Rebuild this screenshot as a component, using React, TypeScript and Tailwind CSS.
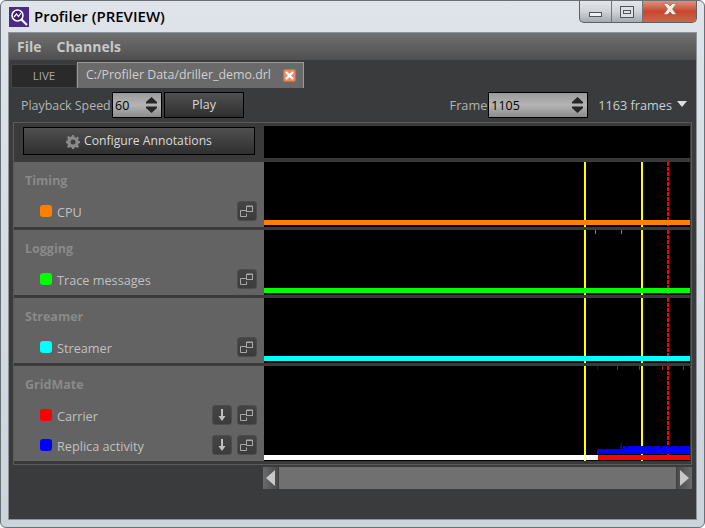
import type { ReactNode } from "react";

const groups = [
  { name: "Timing", bar: "bg-[#ff8000]", label: "CPU", color: "bg-[#ff8000]", ticks: [] as { x: string; c: string }[] },
  {
    name: "Logging",
    bar: "bg-[#00ff00]",
    label: "Trace messages",
    color: "bg-[#00ff00]",
    ticks: [
      { x: "left-[331px]", c: "bg-[#20c020]" },
      { x: "left-[357px]", c: "bg-[#20c020]" },
    ],
  },
  { name: "Streamer", bar: "bg-[#00ffff]", label: "Streamer", color: "bg-[#00ffff]", ticks: [] as { x: string; c: string }[] },
];

const gridTicks = [
  { x: "left-[333px]", c: "bg-[#0000e0]" },
  { x: "left-[353px]", c: "bg-[#c01010]" },
  { x: "left-[375px]", c: "bg-[#c01010]" },
  { x: "left-[398px]", c: "bg-[#c01010]" },
  { x: "left-[419px]", c: "bg-[#c01010]" },
];

const PopoutIcon = () => (
  <svg width="14" height="12" viewBox="0 0 14 12" fill="none" stroke="#a8a8a8" strokeWidth="1">
    <path d="M6 5.5H0.5V11.5H6.5V8.5" />
    <rect x="6.5" y="1.5" width="6" height="5" />
    <path d="M6.5 1H12.5" />
  </svg>
);

const DownIcon = () => (
  <svg width="8" height="12" viewBox="0 0 8 12" fill="#c0c0c0">
    <path d="M3 0H5V7H7.5L4 12L0.5 7H3Z" />
  </svg>
);

const IconBtn = ({ children }: { children: ReactNode }) => (
  <div className="flex h-5 w-5 items-center justify-center rounded-[3px] border border-[#4c4c4c] bg-gradient-to-b from-[#444444] to-[#3c3c3c]">{children}</div>
);

const Row = ({ label, color, down }: { label: string; color: string; down?: boolean }) => (
  <div className="flex h-[30px] items-center pl-[26px] pr-[7px]">
    <div className={`h-3 w-3 rounded-[3px] ${color}`} />
    <span className="ml-[5px] flex-1 translate-y-[2px] text-[12.7px] text-[#c0c0c0]">{label}</span>
    {down && (
      <div className="mr-[5px]">
        <IconBtn>
          <DownIcon />
        </IconBtn>
      </div>
    )}
    <IconBtn>
      <PopoutIcon />
    </IconBtn>
  </div>
);

const Spinner = ({ value, width }: { value: string; width: string }) => (
  <div className={`flex h-[26px] items-center justify-between border border-black bg-gradient-to-b from-[#9a9a9a] via-[#b4b4b4] to-[#8c8c8c] pl-[2px] pr-[4px] text-[12.5px] text-black ${width}`}>
    <span className="translate-y-px">{value}</span>
    <svg width="11" height="16" viewBox="0 0 11 16" fill="#262626">
      <path d="M5.5 0L11 5V6.5H0V5Z" />
      <path d="M0 9.5H11V11L5.5 16L0 11Z" />
    </svg>
  </div>
);

const WindowButtons = () => (
  <div className="flex h-[22px] overflow-hidden rounded-b-[5px] border border-t-0 border-[#5a6066] bg-gradient-to-b from-[#e4e7ea] via-[#d0d4d8] to-[#a4aab0]">
    <div className="flex w-[32px] items-end justify-center border-r border-[#6f757b] pb-[5px]">
      <div className="h-[5px] w-[13px] border border-[#50565c] bg-[#f0f2f4]" />
    </div>
    <div className="flex w-[31px] items-start justify-center border-r border-[#6f757b] pt-[5px]">
      <div className="flex h-[12px] w-[14px] items-center justify-center border border-[#50565c] bg-[#dde0e3]">
        <div className="h-[4px] w-[8px] border border-[#50565c]" />
      </div>
    </div>
    <div className="flex w-[53px] items-center justify-center bg-gradient-to-b from-[#dd9080] via-[#c9452c] to-[#c86650] pb-[5px]">
      <svg width="14" height="12" viewBox="0 0 14 12" fill="#f2eee6" stroke="#7a5048" strokeWidth="0.5">
        <path d="M0.5 0.5H4.5L7 3L9.5 0.5H13.5L9.5 6L13.5 11.5H9.5L7 9L4.5 11.5H0.5L4.5 6Z" />
      </svg>
    </div>
  </div>
);

const Chart = ({ children }: { children: ReactNode }) => (
  <div className="relative flex-1 overflow-hidden bg-black">
    {/* frame markers, behind the bars */}
    <div className="absolute inset-y-0 left-[320px] w-[2px] bg-[#ffff00]" />
    <div className="absolute inset-y-0 left-[377px] w-[2px] bg-[#ffff00]" />
    <div className="absolute inset-y-0 left-[403px] w-[2px] bg-[repeating-linear-gradient(to_bottom,#ff0000_0,#ff0000_4px,#000000_4px,#000000_5px)]" />
    {children}
  </div>
);

export default function App() {
  return (
    <div className="flex h-[528px] w-[705px] flex-col overflow-hidden rounded-[6px] border border-[#6a7077] bg-gradient-to-b from-[#dfe4ea] to-[#cdd3da] px-[7px] pb-[7px] font-['Open_Sans',sans-serif]">
      {/* title bar */}
      <div className="flex h-[31px] shrink-0 justify-between">
        <div className="flex items-start pl-[1px] pt-[6px]">
          <svg width="20" height="20" viewBox="0 0 20 20">
            <rect width="20" height="20" fill="#4b2a8c" />
            <circle cx="8.5" cy="8.5" r="5.5" fill="#3a2070" stroke="#fff" strokeWidth="1.5" />
            <path d="M5 10L7.5 7L9.5 9.5L12 6" stroke="#fff" strokeWidth="1.2" fill="none" />
            <path d="M12.5 12.5L18 18" stroke="#fff" strokeWidth="2.2" />
          </svg>
          <span className="ml-[5px] -translate-y-px text-[15px] font-semibold leading-[20px] text-black">Profiler (PREVIEW)</span>
        </div>
        <WindowButtons />
      </div>

      <div className="flex min-h-0 flex-1 flex-col border border-[#8d949b] bg-[#3a3b3d]">
        {/* menu bar */}
        <div className="flex h-[27px] shrink-0 items-center gap-[15px] bg-gradient-to-b from-[#707070] to-[#4f4f4f] pl-[8px] text-[14px] font-bold text-[#c8c8c8]">
          <span>File</span>
          <span>Channels</span>
        </div>

        {/* tabs */}
        <div className="flex h-[28px] shrink-0 items-end pl-[2px]">
          <div className="flex h-[24px] w-[66px] items-center justify-center border border-[#444444] bg-[#2a2a2a] text-[11.5px] text-[#a8a8a8]">LIVE</div>
          <div className="flex h-[26px] w-[227px] items-center border border-b-0 border-[#9a9a9a] bg-[#6a6a6a] pl-[8px] text-[12.4px] text-[#cfcfcf]">
            <span className="flex-1">C:/Profiler Data/driller_demo.drl</span>
            <div className="mr-[7px] flex h-[13px] w-[13px] items-center justify-center rounded-[2px] border border-[#e8603c] bg-[#eb8a68]">
              <svg width="9" height="9" viewBox="0 0 9 9" stroke="#ffffff" strokeWidth="2.4">
                <path d="M1 1L8 8M8 1L1 8" />
              </svg>
            </div>
          </div>
        </div>

        {/* toolbar */}
        <div className="flex h-[34px] shrink-0 items-center justify-between pl-[12px] pr-[9px]">
          <div className="flex items-center">
            <span className="w-[91px] translate-y-px whitespace-nowrap text-[12.4px] text-[#b4b4b4]">Playback Speed</span>
            <Spinner value="60" width="w-[50px]" />
            <div className="ml-[2px] flex h-[26px] w-[80px] items-center justify-center border border-black bg-gradient-to-b from-[#505050] to-[#2f2f2f] pt-px text-[12.5px] text-[#d8d8d8]">Play</div>
          </div>
          <div className="flex items-center">
            <span className="mr-[1px] translate-y-px text-[12.7px] text-[#b4b4b4]">Frame</span>
            <Spinner value="1105" width="w-[100px]" />
            <span className="ml-[10px] translate-y-px text-[12.7px] text-[#c4d0d8]">1163 frames</span>
            <div className="ml-[5px] h-0 w-0 -translate-y-px border-x-[5px] border-t-[6px] border-x-transparent border-t-[#e0e0e0]" />
          </div>
        </div>

        {/* channel panel */}
        <div className="mx-[4px] flex h-[343px] shrink-0 flex-col border border-[#5a5a5a] bg-[#3a3a3a] pr-[1px]">
          <div className="flex h-[35px] shrink-0">
            <div className="w-[250px] shrink-0 pl-[9px] pt-[4px]">
              <div className="flex h-[28px] w-[232px] items-center justify-center gap-[4px] border border-black bg-gradient-to-b from-[#505050] to-[#2f2f2f] pt-px text-[12.2px] text-[#d8d8d8]">
                <svg width="14" height="14" viewBox="0 0 14 14" fill="#8a8a8a">
                  <path d="M6 0H8L8.4 2L10 2.7L11.8 1.6L13 3L12 4.6L12.6 6H14V8L12.6 8.4L12 10L13 11.6L11.6 13L10 12L8.4 12.6L8 14H6L5.6 12.6L4 12L2.4 13L1 11.6L2 10L1.4 8.4L0 8V6L1.4 5.6L2 4L1 2.4L2.4 1L4 2L5.6 1.4Z" />
                  <circle cx="7" cy="7" r="2.5" fill="#404040" />
                </svg>
                Configure Annotations
              </div>
            </div>
            <div className="mt-[3px] flex-1 bg-black" />
          </div>
          <div className="h-[4px] shrink-0" />
          {groups.map((g) => (
            <div key={g.name} className="mb-[3px] flex h-[65px] shrink-0">
              <div className="flex w-[250px] shrink-0 flex-col bg-[#636363] pb-[1px]">
                <div className="flex-1 pl-[11px] pt-[10px] text-[12.5px] font-bold leading-[17px] text-[#8a8a8a]">{g.name}</div>
                <Row label={g.label} color={g.color} />
              </div>
              <Chart>
                {g.ticks.map((t) => (
                  <div key={t.x} className={`absolute top-0 h-[4px] w-px ${t.x} ${t.c}`} />
                ))}
                <div className={`absolute bottom-[2px] left-0 right-0 h-[5px] ${g.bar}`} />
              </Chart>
            </div>
          ))}
          <div className="flex h-[95px] shrink-0">
            <div className="w-[250px] shrink-0 bg-[#636363]">
              <div className="h-[34px] pl-[11px] pt-[10px] text-[12.5px] font-bold leading-[17px] text-[#8a8a8a]">GridMate</div>
              <Row label="Carrier" color="bg-[#ff0000]" down />
              <Row label="Replica activity" color="bg-[#0000ff]" down />
            </div>
            <Chart>
              {gridTicks.map((t) => (
                <div key={t.x} className={`absolute top-0 h-[4px] w-px ${t.x} ${t.c}`} />
              ))}
              {/* replica activity trace */}
              <svg className="absolute bottom-[7px] left-[333px]" width="93" height="13" viewBox="0 0 93 13" fill="#0000ff">
                <path d="M0 8H23V5H24V2H25V8H26V5H29V6H31V5H38V6H39V5H46V6H48V5H55V6H56V5H63V6H65V5H72V6H74V5H81V6H82V5H93V13H0Z" />
              </svg>
              <div className="absolute bottom-[1px] left-0 right-0 flex h-[5px]">
                <div className="w-[334px] bg-white" />
                <div className="flex-1 bg-[#ff0000]" />
              </div>
            </Chart>
          </div>
        </div>

        {/* scrollbar */}
        <div className="ml-[254px] mr-[4px] mt-[2px] flex h-[22px] shrink-0 items-center bg-[#707070]">
          <div className="flex h-full w-[16px] items-center justify-center border-r border-[#3f3f3f] bg-gradient-to-r from-[#6a6a6a] to-[#4a4a4a]">
            <div className="h-0 w-0 border-y-[8px] border-r-[9px] border-y-transparent border-r-[#c8c8c8]" />
          </div>
          <div className="flex-1" />
          <div className="flex h-full w-[16px] items-center justify-center border-l border-[#3f3f3f] bg-gradient-to-l from-[#6a6a6a] to-[#4a4a4a]">
            <div className="h-0 w-0 border-y-[8px] border-l-[9px] border-y-transparent border-l-[#c8c8c8]" />
          </div>
        </div>
      </div>
    </div>
  );
}
